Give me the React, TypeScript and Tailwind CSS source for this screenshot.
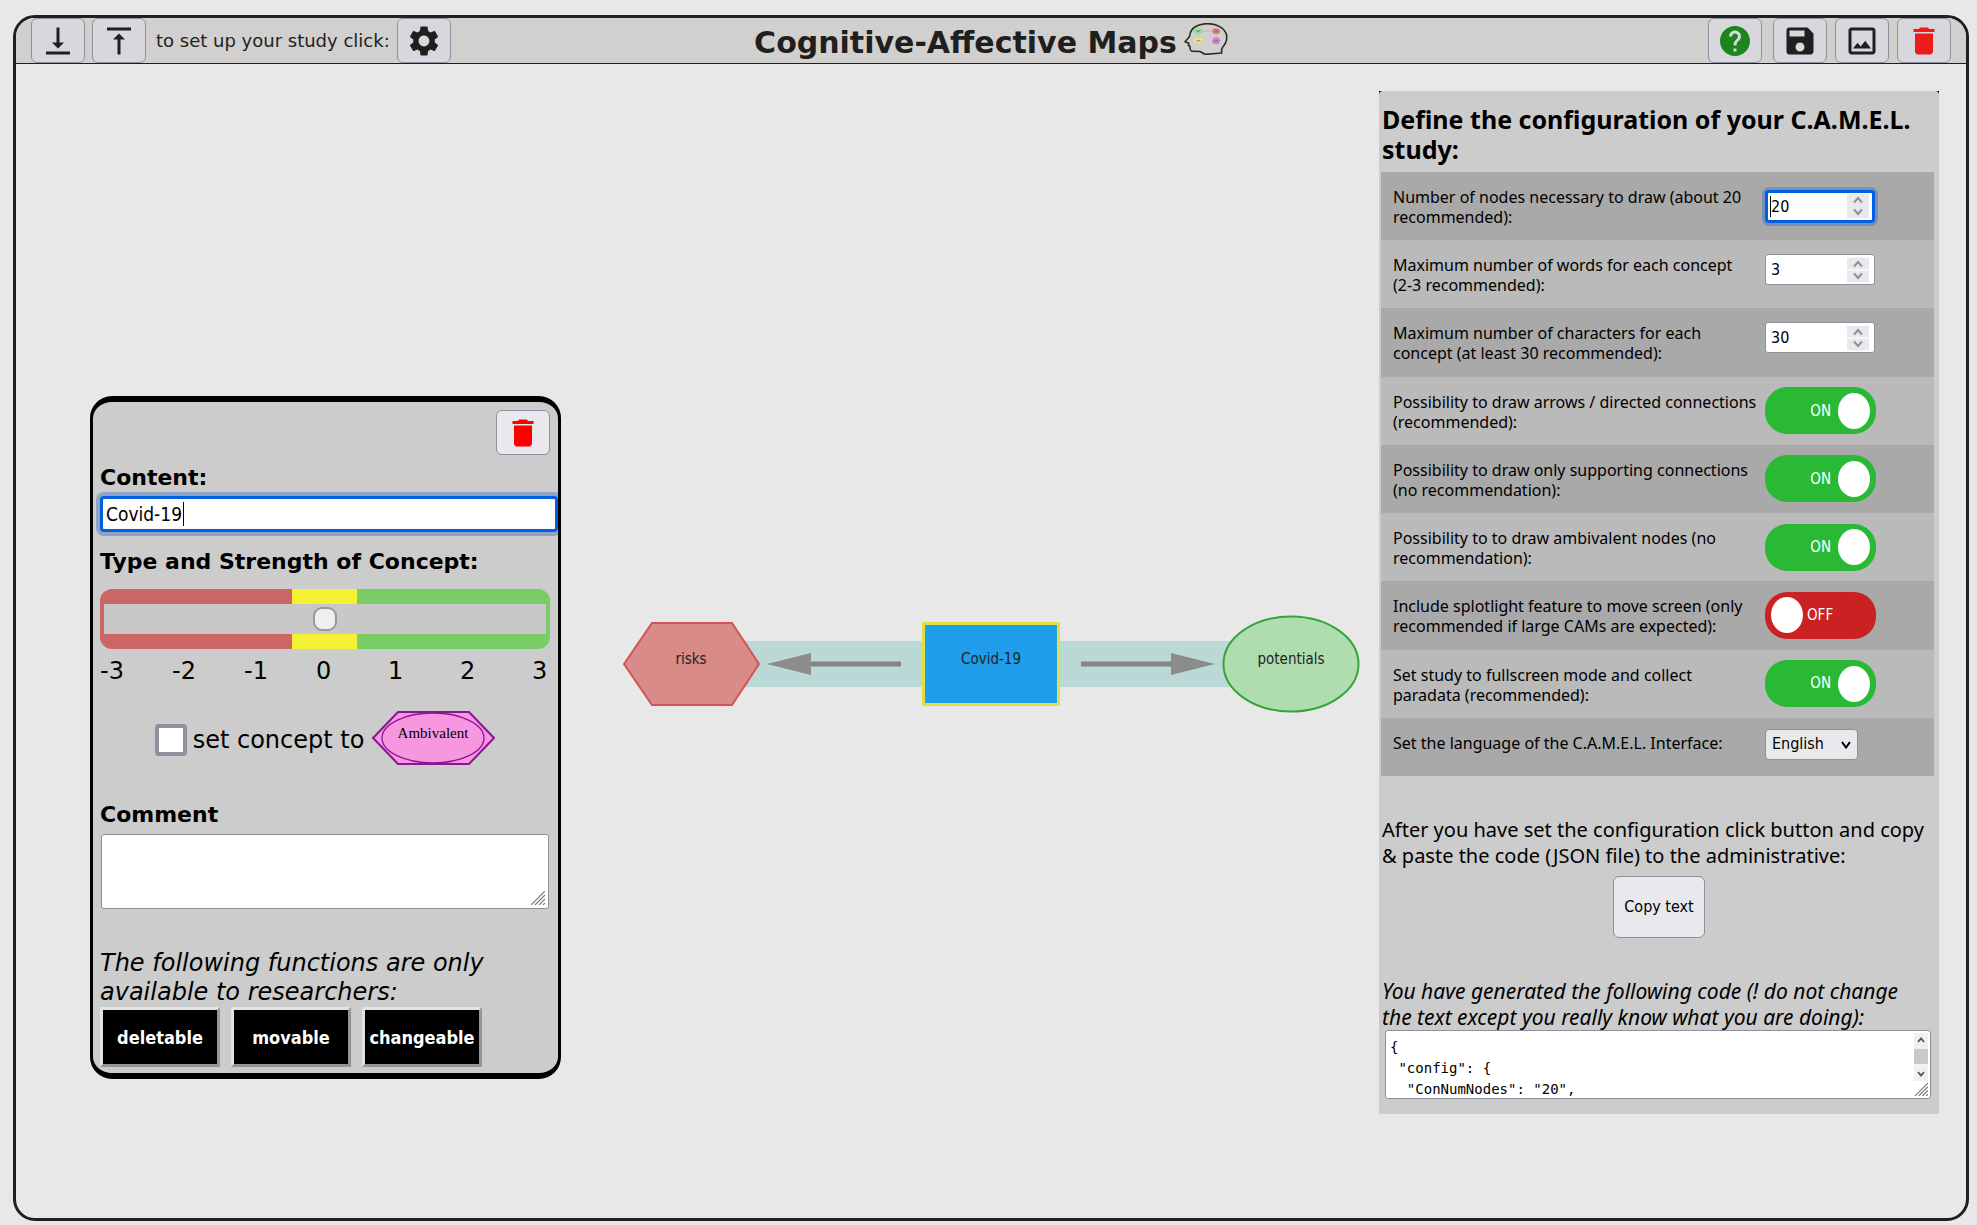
import React, { useState } from 'react';
import {
  MdDelete,
  MdHelp,
  MdOutlineImage,
  MdSave,
  MdSettings,
  MdVerticalAlignBottom,
  MdVerticalAlignTop,
} from 'react-icons/md';

const verdana = "font-['DejaVu_Sans',sans-serif]";
const condensed = "font-['DejaVu_Sans_Condensed','DejaVu_Sans',sans-serif]";
const humanist = "font-['Noto_Sans',sans-serif]";

function ToolButton({ label, children }: { label: string; children: React.ReactNode }) {
  return (
    <button
      type="button"
      aria-label={label}
      className="flex h-[45px] w-[54px] shrink-0 items-center justify-center rounded-md border border-[#8f8f9d] bg-[#d8d7dc] text-[36px] text-[#1f1f1f]"
    >
      {children}
    </button>
  );
}

function HeadLogo() {
  return (
    <svg viewBox="10 8 136 99" className="mb-1 h-[32px] w-[44px]" aria-hidden="true">
      <path
        d="M28 46 C30 22 56 10 84 10 C112 10 134 24 141 42 C145 60 139 72 130 82 C124 90 126 94 127 101 L76 105 C70 104 66 98 59 96 L33 95 C27 92 30 86 28 80 L23 77 L25 71 L13 66 C20 58 27 52 28 46 Z"
        fill="none"
        stroke="#2b2b2b"
        strokeWidth="5"
        strokeLinejoin="round"
      />
      <path d="M54 33 H110 V63 M54 33 V63" fill="none" stroke="#bdbdbd" strokeWidth="3" />
      <ellipse cx="54" cy="33" rx="14" ry="9" fill="#90dc90" />
      <path d="M96 33 l6 -9 h15 l6 9 l-6 9 h-15z" fill="#e17c7c" />
      <rect x="41" y="54" width="27" height="17" fill="#e6e29a" stroke="#dcd878" strokeWidth="2" />
      <path d="M96 63 l6 -10 h15 l6 10 l-6 10 h-15z" fill="#d678cf" />
      <path d="M49 33 h10 M105 33 h10 M49 63 h12 M105 63 h10" stroke="#666" strokeWidth="2.5" />
    </svg>
  );
}

function Toolbar() {
  return (
    <header className="grid grid-cols-[1fr_auto_1fr] items-center border-b border-[#1f1f1f] bg-[#d1d0ce] pr-[15px] pl-[15px]">
      <div className="flex items-center">
        <ToolButton label="Download">
          <MdVerticalAlignBottom />
        </ToolButton>
        <div className="ml-[7px] flex items-center">
          <ToolButton label="Upload">
            <MdVerticalAlignTop />
          </ToolButton>
        </div>
        <span className={`${verdana} mr-[7px] ml-[10px] text-[18px] whitespace-nowrap text-[#1f1f1f]`}>
          to set up your study click:
        </span>
        <ToolButton label="Settings">
          <MdSettings />
        </ToolButton>
      </div>
      <div className="flex items-center gap-[7px]">
        <h1 className={`${verdana} pt-1 text-[30px] leading-[41px] font-bold text-[#1f1f1f]`}>
          Cognitive-Affective Maps
        </h1>
        <HeadLogo />
      </div>
      <div className="flex justify-end gap-2">
        <div className="mr-[3px]">
          <ToolButton label="Help">
            <MdHelp className="text-[#1c851c]" />
          </ToolButton>
        </div>
        <ToolButton label="Save">
          <MdSave />
        </ToolButton>
        <ToolButton label="Save as picture">
          <MdOutlineImage />
        </ToolButton>
        <ToolButton label="Delete map">
          <MdDelete className="text-[#ec1c1c]" />
        </ToolButton>
      </div>
    </header>
  );
}

function ResizeGrip({ className }: { className: string }) {
  return (
    <svg viewBox="0 0 14 14" className={className} aria-hidden="true">
      <path d="M0 14 L14 0 M4 14 L14 4 M8 14 L14 8 M12 14 L14 12" stroke="#777" strokeWidth="1.2" />
    </svg>
  );
}

function NodePanel() {
  const [strength, setStrength] = useState(0);
  return (
    <section
      className={`${verdana} mt-[332px] flex w-[471px] shrink-0 flex-col overflow-hidden rounded-[22px] border-x-[3px] border-y-[6px] border-black bg-[#cccccc] pt-2 pr-2 pb-[6px] pl-[7px] text-black`}
    >
      <button
        type="button"
        aria-label="Delete concept"
        className="flex h-[45px] w-[54px] items-center justify-center self-end rounded-md border border-[#8f8f9d] bg-[#e9e9ed] text-[36px] text-[#ff0000]"
      >
        <MdDelete />
      </button>

      <label htmlFor="content" className="mt-2 text-[22px] leading-[29px] font-bold">
        Content:
      </label>
      <div className="relative mt-1 -mr-2">
        <input
          id="content"
          type="text"
          defaultValue="Covid-19"
          className={`${condensed} block h-[36px] w-full rounded-[4px] border-[3px] border-[#0060df] bg-white px-[3px] text-[19px] ring-4 ring-[#8fa3c9] outline-none`}
        />
        <span className="absolute top-[6px] left-[83px] h-6 w-px bg-black" />
      </div>

      <label htmlFor="strength" className="mt-[15px] text-[22px] leading-[29px] font-bold">
        Type and Strength of Concept:
      </label>
      <div className="mt-[13px] rounded-xl bg-[linear-gradient(to_right,#cc6666_0_192px,#f4f033_192px_257px,#78cd66_257px)] px-1 py-[15px]">
        <input
          id="strength"
          type="range"
          min={-3}
          max={3}
          value={strength}
          onChange={(e) => setStrength(Number(e.target.value))}
          className="block h-[30px] w-full appearance-none bg-[#c8c8c8] outline-none [&::-webkit-slider-thumb]:h-6 [&::-webkit-slider-thumb]:w-6 [&::-webkit-slider-thumb]:appearance-none [&::-webkit-slider-thumb]:rounded-[9px] [&::-webkit-slider-thumb]:border-2 [&::-webkit-slider-thumb]:border-[#999999] [&::-webkit-slider-thumb]:bg-[#efefef]"
        />
      </div>
      <div className="mt-2 flex text-[24px] leading-[29px]">
        {[-3, -2, -1, 0, 1, 2, 3].map((n) => (
          <span key={n} className="w-[72px] shrink-0 last:w-auto">
            {n}
          </span>
        ))}
      </div>

      <div className="mt-[25px] flex items-center justify-center">
        <div className="flex items-center pt-1">
          <input
            id="ambivalent"
            type="checkbox"
            className="mr-[6px] h-8 w-8 appearance-none rounded-[4px] border-4 border-[#8f8f9d] bg-white"
          />
          <label htmlFor="ambivalent" className="text-[24px] leading-[29px]">
            set concept to
          </label>
        </div>
        <svg viewBox="0 0 124 54" className="ml-[7px] h-[54px] w-[124px]" aria-hidden="true">
          <path d="M2 27 L27 1 H98 L123 27 L98 53 H27 Z" fill="#f797e0" stroke="#8c1496" strokeWidth="2" />
          <ellipse cx="62" cy="27" rx="51" ry="25" fill="none" stroke="#8c1496" strokeWidth="1.3" />
          <text
            x="62"
            y="27"
            textAnchor="middle"
            className="font-['Liberation_Serif',serif] text-[15px]"
          >
            Ambivalent
          </text>
        </svg>
      </div>

      <label htmlFor="comment" className="mt-[35px] text-[22px] leading-[29px] font-bold">
        Comment
      </label>
      <div className="relative mt-[5px] mr-px ml-px">
        <textarea
          id="comment"
          className="block h-[75px] w-full resize-none rounded-[3px] border border-[#8f8f9d] bg-white"
        />
        <ResizeGrip className="absolute right-1 bottom-1 h-[14px] w-[14px]" />
      </div>

      <p className="mt-10 text-[24px] leading-[29px] italic">
        The following functions are only available to researchers:
      </p>
      <div className="flex gap-[11px]">
        {['deletable', 'movable', 'changeable'].map((name) => (
          <button
            key={name}
            type="button"
            className={`${condensed} h-[60px] w-[120px] border-[3px] border-t-[#e3e3e3] border-r-[#959595] border-b-[#959595] border-l-[#e3e3e3] bg-black text-[18px] font-bold text-white`}
          >
            {name}
          </button>
        ))}
      </div>
    </section>
  );
}

function ConceptMap() {
  return (
    <svg
      viewBox="0 0 744 100"
      className={`${condensed} mt-[550px] mr-4 ml-auto h-[100px] w-[744px] shrink-0 text-[15px]`}
      role="img"
      aria-label="Concept map"
    >
      <rect x="100" y="27" width="560" height="46" fill="#bad8d6" />
      <path d="M5 50 L33 9 H113 L140 50 L113 91 H33 Z" fill="#d98b8a" stroke="#d25454" strokeWidth="2" />
      <path d="M282 50 H192" stroke="#858585" strokeWidth="5" />
      <path d="M148 50 L192 39 V61 Z" fill="#8c8c8c" />
      <rect x="304.5" y="9.500" width="135" height="81" fill="#209eeb" stroke="#dfe044" strokeWidth="3" />
      <path d="M462 50 H552" stroke="#858585" strokeWidth="5" />
      <path d="M596 50 L552 39 V61 Z" fill="#8c8c8c" />
      <ellipse cx="672" cy="50" rx="67.500" ry="47.500" fill="#b0ddb0" stroke="#35a536" strokeWidth="2" />
      <g textAnchor="middle" fill="#1f1f1f">
        <text x="72" y="50">risks</text>
        <text x="372" y="50">Covid-19</text>
        <text x="672" y="50">potentials</text>
      </g>
    </svg>
  );
}

function NumberField({ id, value, focused = false }: { id: string; value: number; focused?: boolean }) {
  return (
    <div className="relative w-[110px]">
      <input
        id={id}
        type="number"
        defaultValue={value}
        className={`${condensed} block w-full [appearance:textfield] bg-white text-[16px] text-black outline-none [&::-webkit-inner-spin-button]:appearance-none ${
          focused
            ? 'h-[33px] rounded-[4px] border-[3px] border-[#0060df] px-[3px] ring-[3px] ring-[#7a8fb8]'
            : 'h-[31px] rounded-[3px] border border-[#8f8f9d] px-[5px]'
        }`}
      />
      {focused && <span className="absolute top-[6px] left-[5px] h-[21px] w-px bg-black" />}
      <svg
        viewBox="0 0 22 25"
        className="absolute top-1/2 right-[6px] h-[25px] w-[22px] -translate-y-1/2"
        aria-hidden="true"
      >
        <rect width="22" height="25" fill="#e9e9ed" />
        {!focused && <rect y="12" width="22" height="1" fill="#ffffff" />}
        <path
          d="M7 9 L11 4.500 L15 9 M7 16 L11 20.500 L15 16"
          fill="none"
          stroke="#8f8f9d"
          strokeWidth="2"
        />
      </svg>
    </div>
  );
}

function Toggle({ id, initial }: { id: string; initial: boolean }) {
  const [on, setOn] = useState(initial);
  return (
    <button
      id={id}
      type="button"
      role="switch"
      aria-checked={on}
      onClick={() => setOn(!on)}
      className={`${condensed} flex h-[47px] w-[111px] items-center rounded-[22px] px-[6px] text-[15px] text-white ${
        on ? 'flex-row-reverse gap-[7px] bg-[#2ab934]' : 'gap-1 bg-[#ca2222]'
      }`}
    >
      <span className="h-9 w-8 rounded-[50%] bg-white" />
      <span>{on ? 'ON' : 'OFF'}</span>
    </button>
  );
}

type Setting = {
  id: string;
  label: string;
  cell: string;
  control: React.ReactNode;
};

const settings: Setting[] = [
  {
    id: 'nodes',
    label: 'Number of nodes necessary to draw (about 20 recommended):',
    cell: 'align-middle',
    control: <NumberField id="nodes" value={20} focused />,
  },
  {
    id: 'words',
    label: 'Maximum number of words for each concept (2-3 recommended):',
    cell: 'pt-[14px] align-top',
    control: <NumberField id="words" value={3} />,
  },
  {
    id: 'chars',
    label: 'Maximum number of characters for each concept (at least 30 recommended):',
    cell: 'pt-[14px] align-top',
    control: <NumberField id="chars" value={30} />,
  },
  {
    id: 'arrows',
    label: 'Possibility to draw arrows / directed connections (recommended):',
    cell: 'align-middle',
    control: <Toggle id="arrows" initial />,
  },
  {
    id: 'supporting',
    label: 'Possibility to draw only supporting connections (no recommendation):',
    cell: 'align-middle',
    control: <Toggle id="supporting" initial />,
  },
  {
    id: 'ambivalentNodes',
    label: 'Possibility to to draw ambivalent nodes (no recommendation):',
    cell: 'align-middle',
    control: <Toggle id="ambivalentNodes" initial />,
  },
  {
    id: 'spotlight',
    label: 'Include splotlight feature to move screen (only recommended if large CAMs are expected):',
    cell: 'align-middle',
    control: <Toggle id="spotlight" initial={false} />,
  },
  {
    id: 'fullscreen',
    label: 'Set study to fullscreen mode and collect paradata (recommended):',
    cell: 'align-middle',
    control: <Toggle id="fullscreen" initial />,
  },
  {
    id: 'language',
    label: 'Set the language of the C.A.M.E.L. Interface:',
    cell: 'pt-[11px] align-top',
    control: (
      <div className="relative w-[93px]">
        <select
          id="language"
          className={`${condensed} h-[31px] w-full appearance-none rounded-[4px] border border-[#8f8f9d] bg-[#e9e9ed] px-[6px] text-[16px] text-black`}
        >
          <option>English</option>
          <option>Deutsch</option>
        </select>
        <svg viewBox="0 0 10 8" className="absolute top-3 right-[7px] h-2 w-[10px]" aria-hidden="true">
          <path d="M1 1 L5 6.500 L9 1" fill="none" stroke="#000" strokeWidth="2" />
        </svg>
      </div>
    ),
  },
];

const code = `{
 "config": {
  "ConNumNodes": "20",
  "MaxLengthWords": "3",
  "MaxLengthChars": "30"
 }
}`;

function ConfigPanel() {
  return (
    <aside className="mt-[27px] mr-[27px] w-[560px] shrink-0 self-start bg-black">
      <div className={`${humanist} rounded-t-[4px] bg-[#cccccc] pt-[13px] pb-[15px] text-black`}>
        <h2 className="px-[3px] text-[25px] leading-[30px] font-bold">
          Define the configuration of your C.A.M.E.L. study:
        </h2>
        <table className="mt-2 mr-[5px] ml-[2px] h-[604px] w-[553px] table-fixed border-collapse">
          <tbody>
            {settings.map((s) => (
              <tr key={s.id} className="h-[68px] odd:bg-[#a9a9a9] even:bg-[#bababa] last:h-[58px]">
                <td className="w-[384px] p-0 pt-[15px] pl-3 align-top">
                  <label htmlFor={s.id} className="block max-w-[366px] text-[16px] leading-5">
                    {s.label.split(' ').map((word, i) => (
                      <React.Fragment key={i}>
                        {i > 0 && ' '}
                        <span className="whitespace-nowrap">{word}</span>
                      </React.Fragment>
                    ))}
                  </label>
                </td>
                <td className={`p-0 ${s.cell}`}>{s.control}</td>
              </tr>
            ))}
          </tbody>
        </table>
        <p className="mt-[41px] px-[3px] text-[20px] leading-[26px]">
          After you have set the configuration click button and copy &amp; paste the code (JSON file) to the
          administrative:
        </p>
        <button
          type="button"
          className={`${condensed} mx-auto mt-[7px] block h-[62px] w-[92px] rounded-md border border-[#8f8f9d] bg-[#e9e9ed] text-[16px] whitespace-nowrap`}
        >
          Copy text
        </button>
        <label htmlFor="code" className="mt-10 block pr-8 pl-[3px] text-[21px] leading-[26px] italic">
          You have generated the following code (! do not change the text except you really know what you are
          doing):
        </label>
        <div className="relative mr-2 ml-[6px]">
          <textarea
            id="code"
            defaultValue={code}
            className="block h-[69px] w-full resize-none overflow-hidden rounded-[3px] border border-[#8f8f9d] bg-white px-1 pt-[6px] font-['DejaVu_Sans_Mono',monospace] text-[14px] leading-[21px]"
          />
          <svg viewBox="0 0 14 48" className="absolute top-[3px] right-[3px] h-12 w-[14px]" aria-hidden="true">
            <rect width="14" height="48" fill="#f0f0f0" />
            <rect y="16" width="14" height="15" fill="#c9c9c9" />
            <path d="M4 9 L7 5.500 L10 9 M4 39 L7 42.500 L10 39" fill="none" stroke="#555" strokeWidth="1.8" />
          </svg>
          <ResizeGrip className="absolute right-[3px] bottom-[3px] h-[13px] w-[13px]" />
        </div>
      </div>
    </aside>
  );
}

export default function App() {
  return (
    <div className="flex min-h-screen flex-col bg-[#e8e8e8] pt-[15px] pr-2 pb-1 pl-[13px]">
      <div className="flex flex-1 flex-col overflow-hidden rounded-[22px] border-[3px] border-[#1f211f]">
        <Toolbar />
        <main className="flex flex-1 items-start pl-[74px]">
          <NodePanel />
          <ConceptMap />
          <ConfigPanel />
        </main>
      </div>
    </div>
  );
}
